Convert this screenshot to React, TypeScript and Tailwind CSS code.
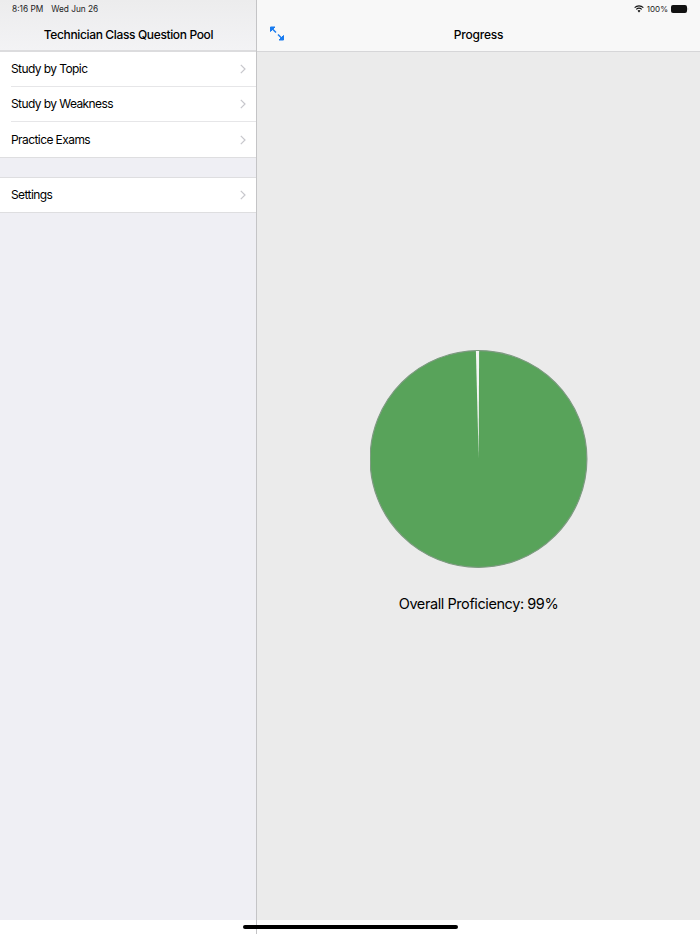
const menuTop = ['Study by Topic', 'Study by Weakness', 'Practice Exams'];
const font = { fontFamily: 'Inter, "Liberation Sans", sans-serif' };

function Chevron() {
  return (
    <svg width="6" height="10" viewBox="0 0 6 10" fill="none" className="shrink-0">
      <path d="M0.8 0.8 L5 5 L0.8 9.2" stroke="#c7c7cc" strokeWidth="1.2" />
    </svg>
  );
}

function Row({ label, last, height }: { label: string; last?: boolean; height: string }) {
  return (
    <div className={`${height} pl-[11px] flex`}>
      <div className={`flex-1 flex items-center justify-between pr-[10px] ${last ? '' : 'border-b border-[#e6e6e8]'}`}>
        <span className="text-[12px] tracking-[-0.58px] text-black">{label}</span>
        <Chevron />
      </div>
    </div>
  );
}

function ExpandIcon() {
  return (
    <svg width="16" height="17" viewBox="0 0 16 17" fill="none">
      <path d="M1.5 6.5 V2 H6 Z" fill="#1a7cf0" stroke="#1a7cf0" strokeWidth="1" />
      <path d="M14.5 10.5 V15 H10 Z" fill="#1a7cf0" stroke="#1a7cf0" strokeWidth="1" />
      <path d="M3 3.5 L7 7.5 M9 9.5 L13 13.5" stroke="#1a7cf0" strokeWidth="1.5" />
    </svg>
  );
}

function StatusIcons() {
  return (
    <div className="flex items-center justify-end h-[17px] pt-[1px] pr-[11px] gap-[3px]">
      <svg width="10" height="8" viewBox="0 0 11 9" fill="none">
        <path d="M0.6 3 A7 7 0 0 1 10.4 3" stroke="#111" strokeWidth="1.3" />
        <path d="M2.4 4.9 A4.5 4.5 0 0 1 8.6 4.9" stroke="#111" strokeWidth="1.3" />
        <path d="M3.9 6.6 A2.2 2.2 0 0 1 7.1 6.6 L5.5 8.4 Z" fill="#111" />
      </svg>
      <span className="text-[8px] text-[#222]">100%</span>
      <svg width="18" height="8" viewBox="0 0 18 8" fill="none">
        <rect x="0" y="0" width="16" height="8" rx="2" fill="#111" />
        <path d="M16.6 2.6 C17.4 2.8 17.6 5.2 16.6 5.4 Z" fill="#999" />
      </svg>
    </div>
  );
}

export default function App() {
  return (
    <div className="w-[700px] h-[934px] relative flex flex-col overflow-hidden bg-white" style={font}>
      <div className="flex h-[920px]">
        {/* Master column */}
        <div className="w-[256px] flex flex-col bg-[#efeff4]">
          <div className="h-[52px] shrink-0 bg-gradient-to-b from-[#ececed] to-[#f3f3f5] border-b-2 border-[#dcdcde]">
            <div className="h-[17px] pl-[12px] pt-[1px] flex items-center gap-[8px] text-[8.3px] text-[#222]">
              <span>8:16 PM</span>
              <span>Wed Jun 26</span>
            </div>
            <div className="h-[33px] pl-[1px] pt-[2px] flex items-center justify-center text-[12px] tracking-[-0.36px] font-medium text-black">
              Technician Class Question Pool
            </div>
          </div>
          <div className="bg-white border-b border-[#dedee0]">
            {menuTop.map((label, i) => (
              <Row key={label} label={label} height="h-[35px]" last={i === menuTop.length - 1} />
            ))}
          </div>
          <div className="mt-[19px] bg-white border-y border-[#dedee0]">
            <Row label="Settings" height="h-[34px]" last />
          </div>
        </div>

        <div className="w-px bg-[#c4c4c6]" />

        {/* Detail column */}
        <div className="flex-1 flex flex-col bg-[#ebebeb]">
          <div className="h-[52px] shrink-0 bg-[#f8f8f8] border-b border-[#d6d6d8]">
            <StatusIcons />
            <div className="h-[34px] relative pt-[1px] flex items-center justify-center text-[12px] tracking-[-0.22px] font-medium text-black">
              <div className="absolute left-[12px] top-[8px]">
                <ExpandIcon />
              </div>
              Progress
            </div>
          </div>
          <div className="flex-1 flex flex-col items-center pt-[298px]">
            <svg width="218" height="218" viewBox="0 0 218 218">
              <circle cx="108.5" cy="109" r="108.4" fill="#58a35a" stroke="#7d9a80" strokeWidth="1.2" />
              <polygon points="105.9,1 109.1,1 108.7,109" fill="#f4f6f4" />
            </svg>
            <div className="mt-[26px] text-[14.5px] tracking-[-0.42px] leading-[20px] text-black">Overall Proficiency: 99%</div>
          </div>
        </div>
      </div>

      {/* Bottom strip */}
      <div className="flex-1 flex">
        <div className="ml-[256px] w-px bg-[#c4c4c6]" />
      </div>
      <div className="absolute left-[243px] top-[925px] w-[215px] h-[3.5px] rounded-full bg-black" />
    </div>
  );
}
